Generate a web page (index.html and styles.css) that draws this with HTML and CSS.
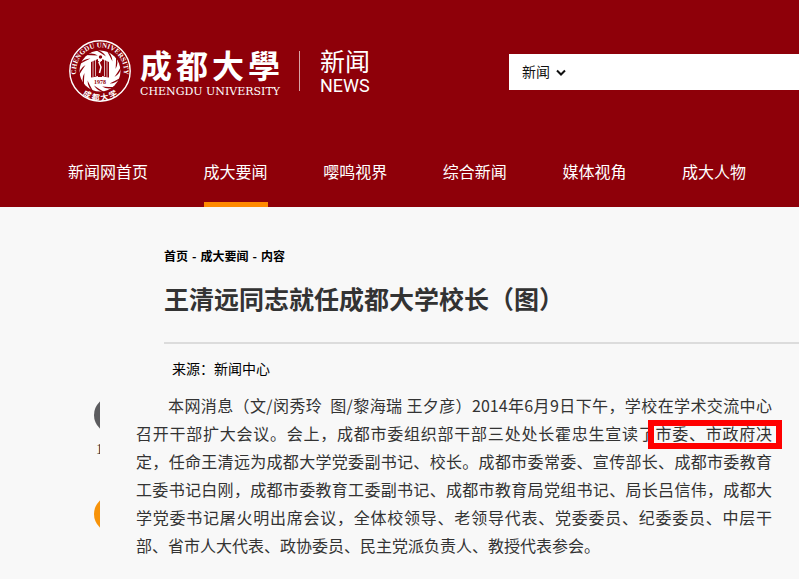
FILE: index.html
```html
<!DOCTYPE html>
<html lang="zh-CN">
<head>
    <meta charset="UTF-8">
    <meta name="viewport" content="width=device-width, initial-scale=1.0">
    <title>王清远同志就任成都大学校长（图）</title>
    <link rel="stylesheet" href="styles.css">
</head>
<body>

    <header class="header">
        <div class="header-top">
            <a class="brand" href="#">
                <svg class="seal" viewBox="0 0 64 64" aria-hidden="true">
                    <defs>
                        <path id="arcTop" d="M10.5 43A24 24 0 1 1 53.5 43"/>
                        <path id="arcBottom" d="M9 50.5A29.5 29.5 0 0 0 55 50.5"/>
                        <path id="blade" d="M27 10.5Q34.5 11.5 38 17.5Q33 14 27 10.5Z"/>
                    </defs>
                    <circle cx="32" cy="32" r="30.2" fill="none" stroke="#fff" stroke-width="1.4"/>
                    <circle cx="32" cy="32" r="20.5" fill="#fff"/>
                    <g fill="#8e0009">
                        <use href="#blade"/>
                        <use href="#blade" transform="rotate(30 32 32)"/>
                        <use href="#blade" transform="rotate(60 32 32)"/>
                        <use href="#blade" transform="rotate(90 32 32)"/>
                        <use href="#blade" transform="rotate(120 32 32)"/>
                        <use href="#blade" transform="rotate(150 32 32)"/>
                        <use href="#blade" transform="rotate(180 32 32)"/>
                        <use href="#blade" transform="rotate(210 32 32)"/>
                        <use href="#blade" transform="rotate(240 32 32)"/>
                        <use href="#blade" transform="rotate(270 32 32)"/>
                        <use href="#blade" transform="rotate(300 32 32)"/>
                        <use href="#blade" transform="rotate(330 32 32)"/>
                        <path d="M23 23L30 20V37Q26 38 23 38.5ZM41 23L34 20V37Q38 38 41 38.5Z"/>
                        <path d="M29 22H35L34 38H30Z"/>
                        <circle cx="32.5" cy="18" r="1.7"/>
                    </g>
                    <path d="M25 22V38M27.5 21V37M39 22V38M36.5 21V37" stroke="#fff" stroke-width=".7"/>
                    <path d="M34 20L31 23.5L33 28L31.5 34" fill="none" stroke="#fff" stroke-width="1.5"/>
                    <text class="seal-year" x="32" y="45" text-anchor="middle">1978</text>
                    <text class="seal-latin"><textPath href="#arcTop" startOffset="50%" text-anchor="middle">CHENGDU UNIVERSITY</textPath></text>
                    <text class="seal-han"><textPath href="#arcBottom" startOffset="50%" text-anchor="middle">成 都 大 学</textPath></text>
                </svg>
                <span class="brand-name">
                    <span class="brand-han"><span>成</span><span>都</span><span>大</span><span>學</span></span>
                    <span class="brand-latin">CHENGDU UNIVERSITY</span>
                </span>
                <span class="brand-news">
                    <span class="news-han">新闻</span>
                    <span class="news-latin">NEWS</span>
                </span>
            </a>
            <form class="search">
                <div class="search-type">
                    <select aria-label="搜索类型">
                        <option>新闻</option>
                    </select>
                    <svg class="chevron" viewBox="0 0 10 8" aria-hidden="true">
                        <path d="M1 1.5L5 5.5L9 1.5" fill="none" stroke="#111" stroke-width="2"/>
                    </svg>
                </div>
                <input type="text" aria-label="搜索">
            </form>
        </div>
        <nav class="nav">
            <a href="#">新闻网首页</a>
            <a href="#" class="active">成大要闻</a>
            <a href="#">嘤鸣视界</a>
            <a href="#">综合新闻</a>
            <a href="#">媒体视角</a>
            <a href="#">成大人物</a>
        </nav>
    </header>

    <main class="main">
        <div class="article-head">
            <div class="breadcrumb"><a href="#">首页</a><span>-</span><a href="#">成大要闻</a><span>-</span><a href="#">内容</a></div>
            <h1>王清远同志就任成都大学校长（图）</h1>
            <p class="source">来源：新闻中心</p>
        </div>
        <div class="article-body">
            <aside class="tools">
                <span class="tool tool-view"></span>
                <span class="tool-count">1</span>
                <span class="tool tool-share"></span>
            </aside>
            <p class="text">本网消息（文/闵秀玲&nbsp; 图/黎海瑞 王夕彦）2014年6月9日下午，学校在学术交流中心召开干部扩大会议。会上，成都市委组织部干部三处处长霍忠生宣读了<span class="marked">市委、市政府决</span>定，任命王清远为成都大学党委副书记、校长。成都市委常委、宣传部长、成都市委教育工委书记白刚，成都市委教育工委副书记、成都市教育局党组书记、局长吕信伟，成都大学党委书记屠火明出席会议，全体校领导、老领导代表、党委委员、纪委委员、中层干部、省市人大代表、政协委员、民主党派负责人、教授代表参会。</p>
        </div>
    </main>

</body>
</html>
```
FILE: styles.css
```css
* {
    box-sizing: border-box;
}
body {
    margin: 0;
    background-color: #f8f8f8;
    color: #333;
    font-family: "Noto Sans CJK SC", sans-serif;
    font-size: 16px;
    overflow-x: hidden;
}
a {
    color: inherit;
    text-decoration: none;
}

/* header */
.header {
    background-color: #8e0009;
    color: #fff;
}
.header-top {
    display: flex;
    justify-content: space-between;
    padding: 39px 0 0 68px;
    height: 144px;
}
.brand {
    display: flex;
    align-items: flex-start;
}
.seal {
    width: 64px;
    height: 64px;
}
.seal text {
    fill: #fff;
}
.seal .seal-year {
    fill: #8e0009;
    font: bold 6px "Liberation Serif", serif;
}
.seal-latin {
    font: bold 7px "Liberation Serif", serif;
}
.seal-han {
    font: bold 8px "Noto Sans CJK SC", sans-serif;
}
.brand-name {
    display: flex;
    flex-direction: column;
    width: 140px;
    margin: 7px 0 0 8px;
}
.brand-han {
    display: flex;
    justify-content: space-between;
    font-size: 32px;
    font-weight: bold;
    line-height: 36px;
}
.brand-latin {
    margin-top: 2px;
    font-family: "DejaVu Serif", serif;
    font-size: 11px;
    line-height: 16px;
    white-space: nowrap;
}
.brand-news {
    display: flex;
    flex-direction: column;
    margin: 12px 0 0 19px;
    padding-left: 20px;
    height: 40px;
    border-left: 1px solid #d9a5a8;
}
.news-han {
    margin-top: -5px;
    font-size: 25px;
    line-height: 28px;
}
.news-latin {
    font-family: Roboto, sans-serif;
    font-size: 18px;
    line-height: 24px;
}

/* search box */
.search {
    display: flex;
    flex: 0 0 290px;
    height: 36px;
    margin-top: 15px;
    background-color: #fff;
}
.search-type {
    position: relative;
}
.search select {
    width: 66px;
    height: 36px;
    padding: 0 0 2px 13px;
    border: 0;
    background: none;
    color: #111;
    font-family: inherit;
    font-size: 14px;
    appearance: none;
}
.search input {
    flex: 1;
    min-width: 0;
    border: 0;
    background: none;
}
.chevron {
    position: absolute;
    top: 15px;
    right: 9px;
    width: 10px;
    height: 8px;
    pointer-events: none;
}

/* navigation */
.nav {
    display: flex;
    justify-content: space-between;
    padding: 0 53px 0 68px;
}
.nav a {
    height: 63px;
    padding-top: 15px;
    line-height: 24px;
    border-bottom: 5px solid transparent;
}
.nav a.active {
    border-bottom-color: #ff8a00;
}

/* article */
.article-head {
    padding: 39px 0 0 164px;
}
.breadcrumb {
    color: #000;
    font-size: 12px;
    font-weight: bold;
    line-height: 20px;
}
.breadcrumb span {
    margin: 0 4px;
}
h1 {
    margin: 0;
    padding: 11px 0 23px;
    border-bottom: 2px solid #dcdcdc;
    font-size: 25px;
    line-height: 42px;
}
.source {
    margin: 0;
    padding: 14px 0 13px 8px;
    color: #000;
    font-size: 14px;
    line-height: 20px;
}
.article-body {
    display: flex;
    padding-right: 27px;
}
.tools {
    display: flex;
    flex: 0 0 100px;
    flex-direction: column;
    padding: 6px 0 0 94px;
    margin-right: 36px;
    overflow: hidden;
}
.tool {
    flex-shrink: 0;
    width: 36px;
    height: 36px;
    border-radius: 50%;
}
.tool-view {
    background-color: #5c5c5f;
}
.tool-share {
    background-color: #f7930a;
}
.tool-count {
    padding: 7px 0 36px 2px;
    font-family: "Liberation Serif", serif;
    font-size: 14px;
    line-height: 20px;
}
.text {
    flex: 1;
    margin: 0;
    line-height: 28px;
    text-align: justify;
    text-indent: 2em;
    text-spacing-trim: space-all;
}
.marked {
    position: relative;
}
.marked::after {
    content: "";
    position: absolute;
    inset: -1px -10px -4px -7px;
    border: 6px solid #f00;
}
```
